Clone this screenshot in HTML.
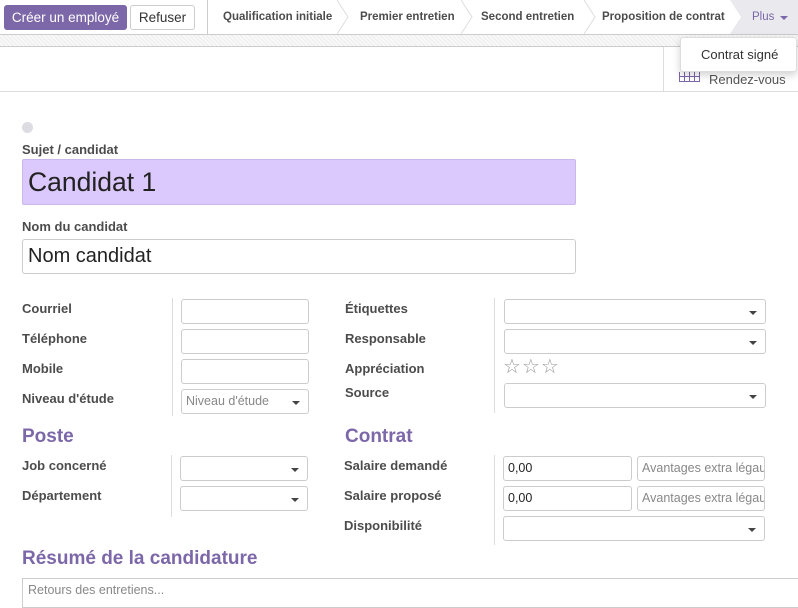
<!DOCTYPE html>
<html><head><meta charset="utf-8"><style>
*{box-sizing:border-box;margin:0;padding:0}
body{width:798px;height:595px;overflow:hidden;background:#fff;font-family:"Liberation Sans",Arial,sans-serif;color:#4c4c4c;position:relative}
.a{position:absolute}
.lbl{position:absolute;font-size:13px;font-weight:bold;color:#4c4c4c}
.inp{position:absolute;border:1px solid #ccc;border-radius:3px;background:#fff;height:25px}
.sel::after{content:"";position:absolute;right:8px;top:11px;border-left:4px solid transparent;border-right:4px solid transparent;border-top:4px solid #444}
.st{position:absolute;top:0;height:34px;line-height:34px;font-size:11.5px;font-weight:bold;color:#4c4c4c}
.arr{position:absolute;top:0;width:12px;height:34px}
.h{position:absolute;font-size:19px;font-weight:bold;color:#7c67a8}
.vl{position:absolute;width:1px;background:#ddd}
.ph{font-size:12.5px;color:#888;line-height:23px;padding-left:4px;white-space:nowrap;overflow:hidden}
</style></head><body>
<div class="a" style="left:0;top:0;width:798px;height:35px;border-bottom:1px solid #ccc;background:#fff"></div>
<div class="a" style="left:4px;top:5px;width:123px;height:25px;background:#7c67a8;border-radius:3px;color:#fff;font-size:13.5px;line-height:25px;text-align:center">Créer un employé</div>
<div class="a" style="left:130px;top:5px;width:65px;height:25px;border:1px solid #ccc;border-radius:3px;color:#333;font-size:13.5px;line-height:23px;text-align:center">Refuser</div>
<div class="vl" style="left:207px;top:0;height:34px;background:#ccc"></div>
<div class="st" style="left:223px">Qualification initiale</div>
<svg class="arr" style="left:337px" viewBox="0 0 12 34"><path d="M0 0L11 17L0 34" fill="none" stroke="#ddd"/></svg>
<div class="st" style="left:360px">Premier entretien</div>
<svg class="arr" style="left:461px" viewBox="0 0 12 34"><path d="M0 0L11 17L0 34" fill="none" stroke="#ddd"/></svg>
<div class="st" style="left:481px">Second entretien</div>
<svg class="arr" style="left:584px" viewBox="0 0 12 34"><path d="M0 0L11 17L0 34" fill="none" stroke="#ddd"/></svg>
<div class="st" style="left:602px">Proposition de contrat</div>
<svg class="a" style="left:730px;top:0" width="68" height="34"><path d="M0 0H68V34H0L11 17Z" fill="#e9e9ee"/></svg>
<div class="st" style="left:752px;color:#7c67a8;font-weight:normal">Plus</div>
<div class="a" style="left:780px;top:16px;border-left:4px solid transparent;border-right:4px solid transparent;border-top:4px solid #7c67a8"></div>
<div class="a" style="left:0;top:35px;width:798px;height:12px;background:repeating-linear-gradient(45deg,#eee 0 1px,#f8f8f8 1px 3px);border-bottom:1px solid #ccc"></div>
<div class="a" style="left:0;top:91px;width:798px;height:1px;background:#ddd"></div>
<div class="vl" style="left:663px;top:47px;height:44px"></div>
<svg class="a" style="left:679px;top:72px" width="21" height="10"><path d="M0.5 0V9.5H20.5V0M5.5 0V9.5M10.5 0V9.5M15.5 0V9.5M0 4.5H21" fill="none" stroke="#7c67a8"/></svg>
<div class="a" style="left:709px;top:72px;font-size:13px;color:#555">Rendez-vous</div>
<div class="a" style="left:680px;top:37px;width:117px;height:35px;background:#fff;border:1px solid #ddd;border-radius:3px;box-shadow:0 3px 8px rgba(0,0,0,.18);font-size:13px;color:#333;line-height:34px;padding-left:20px">Contrat signé</div>

<div class="a" style="left:22px;top:122px;width:11px;height:11px;border-radius:50%;background:#dcdce2"></div>
<div class="lbl" style="left:22px;top:142px">Sujet / candidat</div>
<div class="a" style="left:22px;top:159px;width:554px;height:46px;background:#dbc8fc;border:1px solid #c9b8e8;border-radius:2px;font-size:26.5px;color:#222;line-height:44px;padding-left:5px">Candidat 1</div>
<div class="lbl" style="left:22px;top:219px">Nom du candidat</div>
<div class="inp" style="left:22px;top:239px;width:554px;height:35px;font-size:20px;color:#222;line-height:33px;padding-left:5px">Nom candidat</div>

<div class="lbl" style="left:22px;top:301px">Courriel</div>
<div class="lbl" style="left:22px;top:331px">Téléphone</div>
<div class="lbl" style="left:22px;top:361px">Mobile</div>
<div class="lbl" style="left:22px;top:391px">Niveau d'étude</div>
<div class="vl" style="left:172px;top:298px;height:118px"></div>
<div class="inp" style="left:181px;top:299px;width:128px"></div>
<div class="inp" style="left:181px;top:329px;width:128px"></div>
<div class="inp" style="left:181px;top:359px;width:128px"></div>
<div class="inp sel ph" style="left:181px;top:389px;width:128px">Niveau d'étude</div>

<div class="lbl" style="left:345px;top:301px">Étiquettes</div>
<div class="lbl" style="left:345px;top:331px">Responsable</div>
<div class="lbl" style="left:345px;top:361px">Appréciation</div>
<div class="lbl" style="left:345px;top:385px">Source</div>
<div class="vl" style="left:494px;top:298px;height:115px"></div>
<div class="inp sel" style="left:504px;top:299px;width:262px"></div>
<div class="inp sel" style="left:504px;top:329px;width:262px"></div>
<div class="a" style="left:503px;top:354px;font-size:20px;color:#999;letter-spacing:1px">☆☆☆</div>
<div class="inp sel" style="left:504px;top:383px;width:262px"></div>

<div class="h" style="left:22px;top:426px">Poste</div>
<div class="h" style="left:345px;top:426px">Contrat</div>
<div class="lbl" style="left:22px;top:458px">Job concerné</div>
<div class="lbl" style="left:22px;top:488px">Département</div>
<div class="vl" style="left:171px;top:455px;height:62px"></div>
<div class="inp sel" style="left:180px;top:456px;width:128px"></div>
<div class="inp sel" style="left:180px;top:486px;width:128px"></div>

<div class="lbl" style="left:344px;top:458px">Salaire demandé</div>
<div class="lbl" style="left:344px;top:488px">Salaire proposé</div>
<div class="lbl" style="left:344px;top:518px">Disponibilité</div>
<div class="vl" style="left:494px;top:455px;height:90px"></div>
<div class="inp ph" style="left:503px;top:456px;width:129px;color:#222">0,00</div>
<div class="inp ph" style="left:637px;top:456px;width:128px">Avantages extra légaux</div>
<div class="inp ph" style="left:503px;top:486px;width:129px;color:#222">0,00</div>
<div class="inp ph" style="left:637px;top:486px;width:128px">Avantages extra légaux</div>
<div class="inp sel" style="left:503px;top:516px;width:262px"></div>

<div class="h" style="left:22px;top:548px">Résumé de la candidature</div>
<div class="a" style="left:22px;top:578px;width:776px;height:30px;border:1px solid #ccc;border-right:none;font-size:12.5px;color:#888;padding:4px 0 0 5px">Retours des entretiens...</div>
</body></html>
